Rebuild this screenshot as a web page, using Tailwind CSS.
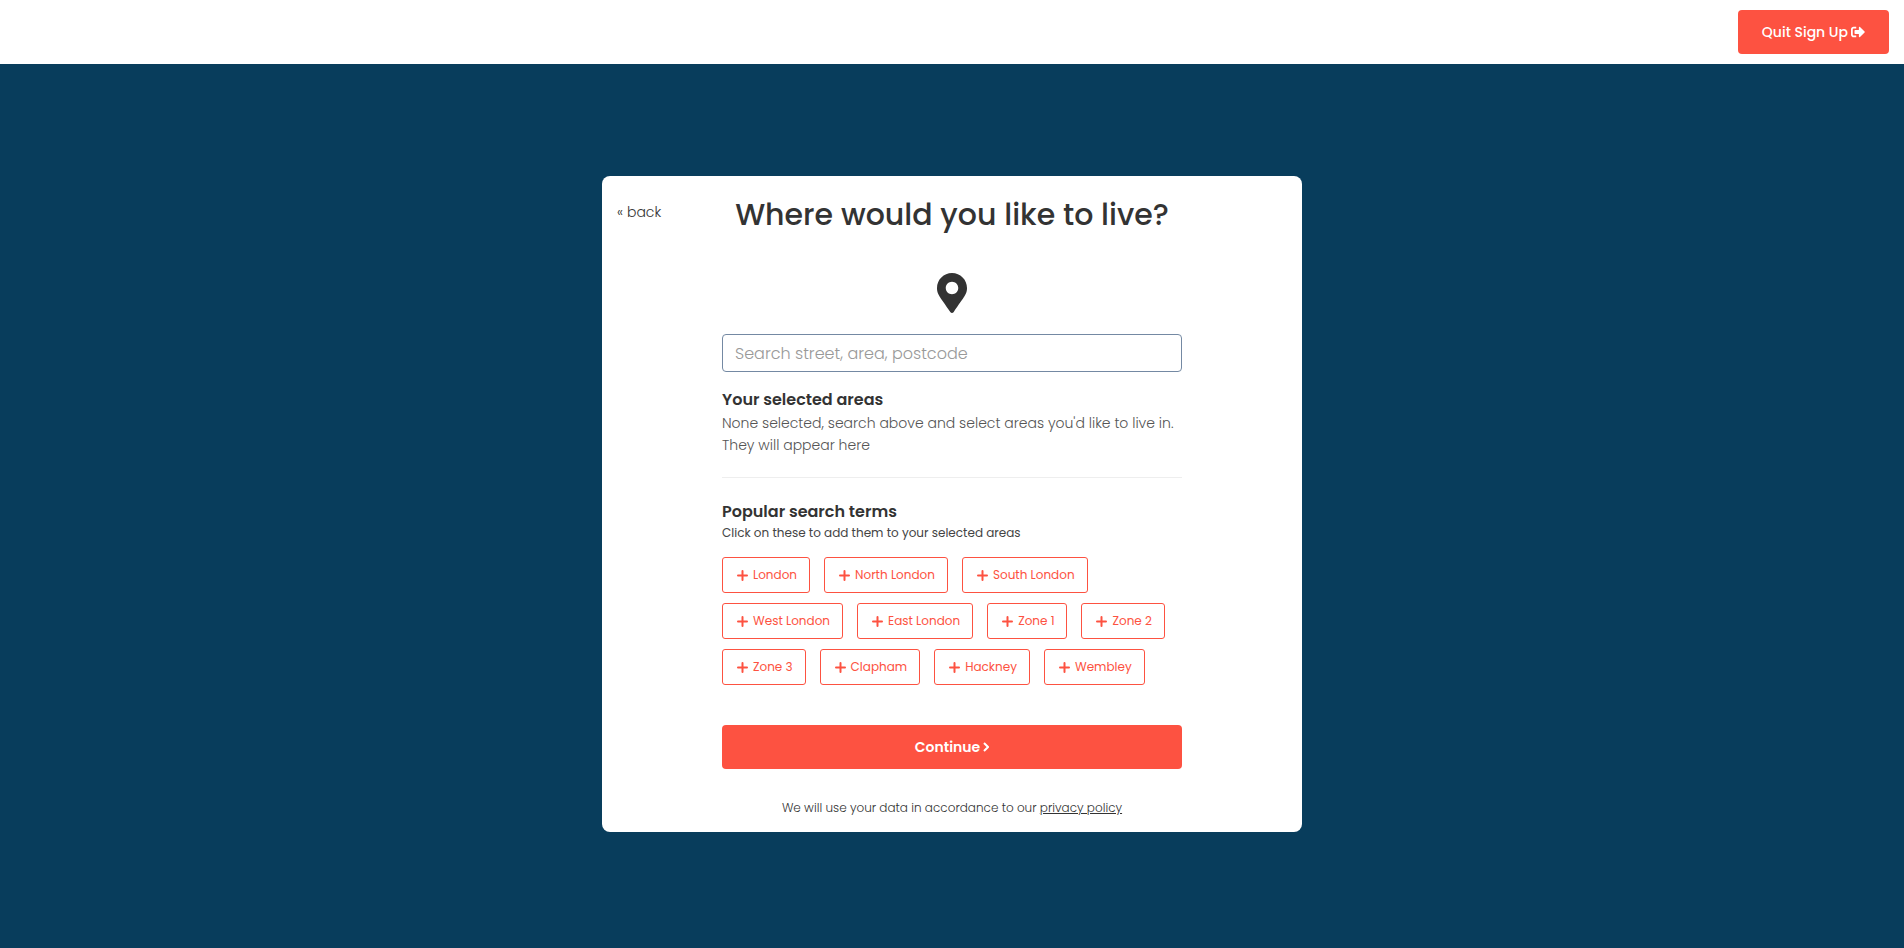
<!DOCTYPE html>
<html lang="en">
<head>
<meta charset="utf-8">
<meta name="viewport" content="width=device-width, initial-scale=1">
<title>Where would you like to live?</title>
<script src="https://cdn.jsdelivr.net/npm/@tailwindcss/browser@4"></script>
</head>
<body class="flex min-h-screen flex-col bg-[#083d5c] font-['Poppins','Inter',sans-serif] text-[#333]">
<svg class="hidden" aria-hidden="true">
  <symbol id="plus" viewBox="0 0 11 11"><path d="M5.5 1v9M1 5.5h9" fill="none" stroke="currentColor" stroke-width="2" stroke-linecap="round"/></symbol>
</svg>
<header class="flex h-16 items-center justify-end bg-white px-[15px]">
  <button type="button" class="flex h-11 items-center gap-[3px] rounded bg-[#fd5241] px-6 text-sm font-medium text-white">Quit Sign Up
    <svg class="size-3.5" viewBox="0 0 512 512" fill="currentColor" aria-hidden="true"><path d="M497 273L329 441c-15 15-41 4.5-41-17v-96H152c-13.3 0-24-10.7-24-24v-96c0-13.3 10.7-24 24-24h136V88c0-21.4 25.9-32 41-17l168 168c9.3 9.4 9.3 24.6 0 34zM192 436v-40c0-6.6-5.4-12-12-12H96c-17.7 0-32-14.3-32-32V160c0-17.7 14.3-32 32-32h84c6.6 0 12-5.4 12-12V76c0-6.6-5.4-12-12-12H96c-53 0-96 43-96 96v192c0 53 43 96 96 96h84c6.6 0 12-5.4 12-12z"/></svg>
  </button>
</header>
<main class="flex flex-1 items-start justify-center py-28">
  <form class="w-full max-w-[700px] rounded-lg bg-white px-[15px] pt-[21px] pb-3.5">
    <div class="grid grid-cols-[1fr_auto_1fr] items-start">
      <a href="#" class="mt-1 text-sm leading-[22px] font-light">« back</a>
      <h1 class="text-3xl leading-9 font-medium">Where would you like to live?</h1>
    </div>
    <div class="mx-auto max-w-[460px]">
      <svg class="mx-auto mt-10 h-10 w-[30px]" viewBox="0 0 384 512" fill="currentColor" aria-hidden="true"><path d="M172.268 501.67C26.97 291.031 0 269.413 0 192 0 85.961 85.961 0 192 0s192 85.961 192 192c0 77.413-26.97 99.031-172.268 309.67-9.535 13.774-29.93 13.773-39.464 0zM192 272c44.183 0 80-35.817 80-80s-35.817-80-80-80-80 35.817-80 80 35.817 80 80 80z"/></svg>
      <input type="text" aria-label="Search street, area, postcode" placeholder="Search street, area, postcode" class="mt-[21px] block h-[38px] w-full rounded border border-[#7489a3] px-3 text-base font-light placeholder:text-[#999]">
      <h2 class="mt-4 text-base leading-6 font-semibold">Your selected areas</h2>
      <p class="text-sm leading-[22px] font-light text-[#555]">None selected, search above and select areas you'd like to live in. They will appear here</p>
      <hr class="mt-[21px] border-[#eee]">
      <h2 class="mt-[22px] text-base leading-6 font-semibold">Popular search terms</h2>
      <p class="text-xs leading-[18px] text-[#444]">Click on these to add them to your selected areas</p>
      <div class="mt-[15px] flex flex-wrap gap-x-3.5 gap-y-2.5 text-xs text-[#fd5241]">
        <button type="button" class="flex h-9 items-center gap-[5px] rounded-[3px] border border-current pr-3 pl-3.5"><svg class="size-[11px]"><use href="#plus"/></svg>London</button>
        <button type="button" class="flex h-9 items-center gap-[5px] rounded-[3px] border border-current pr-3 pl-3.5"><svg class="size-[11px]"><use href="#plus"/></svg>North London</button>
        <button type="button" class="flex h-9 items-center gap-[5px] rounded-[3px] border border-current pr-3 pl-3.5"><svg class="size-[11px]"><use href="#plus"/></svg>South London</button>
        <button type="button" class="flex h-9 items-center gap-[5px] rounded-[3px] border border-current pr-3 pl-3.5"><svg class="size-[11px]"><use href="#plus"/></svg>West London</button>
        <button type="button" class="flex h-9 items-center gap-[5px] rounded-[3px] border border-current pr-3 pl-3.5"><svg class="size-[11px]"><use href="#plus"/></svg>East London</button>
        <button type="button" class="flex h-9 items-center gap-[5px] rounded-[3px] border border-current pr-3 pl-3.5"><svg class="size-[11px]"><use href="#plus"/></svg>Zone 1</button>
        <button type="button" class="flex h-9 items-center gap-[5px] rounded-[3px] border border-current pr-3 pl-3.5"><svg class="size-[11px]"><use href="#plus"/></svg>Zone 2</button>
        <button type="button" class="flex h-9 items-center gap-[5px] rounded-[3px] border border-current pr-3 pl-3.5"><svg class="size-[11px]"><use href="#plus"/></svg>Zone 3</button>
        <button type="button" class="flex h-9 items-center gap-[5px] rounded-[3px] border border-current pr-3 pl-3.5"><svg class="size-[11px]"><use href="#plus"/></svg>Clapham</button>
        <button type="button" class="flex h-9 items-center gap-[5px] rounded-[3px] border border-current pr-3 pl-3.5"><svg class="size-[11px]"><use href="#plus"/></svg>Hackney</button>
        <button type="button" class="flex h-9 items-center gap-[5px] rounded-[3px] border border-current pr-3 pl-3.5"><svg class="size-[11px]"><use href="#plus"/></svg>Wembley</button>
      </div>
      <button type="submit" class="mt-10 flex h-11 w-full items-center justify-center gap-[3px] rounded bg-[#fd5241] text-sm font-semibold text-white">Continue
        <svg class="h-2.5 w-1.5" viewBox="0 0 6 10" fill="none" stroke="currentColor" stroke-width="2" aria-hidden="true"><path d="M1 1l4 4-4 4"/></svg>
      </button>
      <p class="mt-[29px] text-center text-xs leading-5 font-light">We will use your data in accordance to our <a href="#" class="underline">privacy policy</a></p>
    </div>
  </form>
</main>
</body>
</html>
